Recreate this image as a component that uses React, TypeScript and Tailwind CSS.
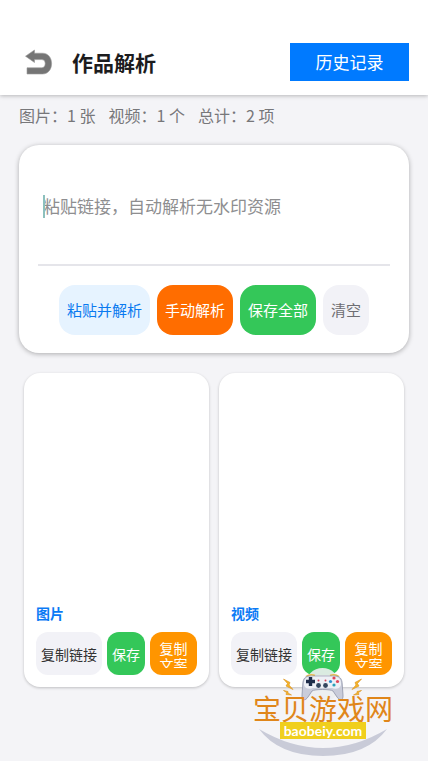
import React, { useState } from 'react';
import clsx from 'clsx';

interface MediaItem {
  id: string;
  label: string;
}

const items: MediaItem[] = [
  { id: 'image', label: '图片' },
  { id: 'video', label: '视频' },
];

const stats = ['图片：1 张', '视频：1 个', '总计：2 项'];

const actions = [
  { label: '粘贴并解析', className: 'bg-[#e6f3ff] text-[#0a7af0]' },
  { label: '手动解析', className: 'bg-[#ff6d00] text-white' },
  { label: '保存全部', className: 'bg-[#34c759] text-white' },
  { label: '清空', className: 'bg-[#f2f2f7] text-[#6e6e73]' },
];

const BackIcon: React.FC = () => (
  <svg viewBox="0 0 28 26" className="h-[26px] w-7" fill="none">
    <path
      d="M0.500 7.200L9.500 1V4.200H17.500C23 4.200 26.600 8.500 26.600 14.500S23 25 17.500 25H2V18.800H16.500C19 18.800 20.200 17 20.200 14.600S19 10.600 16.500 10.600H9.500V13.500Z"
      fill="#757575"
      stroke="#9a9a9a"
      strokeWidth="0.6"
      strokeLinejoin="round"
    />
  </svg>
);

const MediaCard: React.FC<{ item: MediaItem }> = ({ item }) => (
  <article className="rounded-2xl bg-white p-3 shadow-[0_1px_3px_rgba(0,0,0,0.22)]">
    <div className="h-[218px]" />
    <h2 className="text-sm leading-5 font-bold text-[#0a7af5]">{item.label}</h2>
    <div className="mt-[9px] flex gap-[5px] text-sm leading-4">
      <button className="h-[43px] rounded-xl bg-[#f2f2f7] px-[5px] whitespace-nowrap text-[#333333]">
        复制链接
      </button>
      <button className="h-[43px] rounded-xl bg-[#34c759] px-[5px] whitespace-nowrap text-white">
        保存
      </button>
      <button className="h-[43px] w-12 rounded-xl bg-[#ff9500] px-[9px] text-white">
        <span className="block h-7 overflow-hidden">复制文案</span>
      </button>
    </div>
  </article>
);

const Gamepad: React.FC = () => (
  <svg viewBox="0 0 80 34" className="h-[34px] w-20" fill="none">
    <circle cx="39.500" cy="17" r="17" fill="#eceef0" opacity="0.9" />
    {/* sparks */}
    <g fill="#f5b52a" stroke="#d98e1d" strokeWidth="0.6">
      <path d="M0.500 11L7 14.500L6 17L10 21.500L3 18L4.500 15.500Z" />
      <path d="M0.500 22.500L5 23.500L5 25L8.500 27L3 26.500L3.500 24.500Z" />
      <path d="M78.500 11L72 14.500L73 17L69 21.500L76 18L74.500 15.500Z" />
      <path d="M78.500 22.500L74 23.500L74 25L70.500 27L76 26.500L75.500 24.500Z" />
    </g>
    {/* shoulder buttons */}
    <path d="M23 8.500Q27 5.500 32 7.500M47 7.500Q52 5.500 56 8.500" stroke="#e9b949" strokeWidth="1.500" />
    {/* body */}
    <path
      d="M27 8H52C57 8 59 11 59.200 16L60 27C60.500 33 56.500 33 54 29L50 23C48 21 31 21 29 23L25 29C22.500 33 18.500 33 19 27L19.800 16C20 11 22 8 27 8Z"
      fill="#c9ccda"
      stroke="#8f94a8"
      strokeWidth="0.8"
    />
    <path d="M28 8.500H51C56 8.500 58.500 12 58 17C57 21 52 21.500 49 20H30C27 21.500 22 21 21 17C20.500 12 23 8.500 28 8.500Z" fill="#eef0f6" />
    <path d="M27.500 9V18M23 13.500H32" stroke="#1f2d4a" strokeWidth="3.400" />
    <circle cx="35.500" cy="17.500" r="2.400" fill="#33455f" />
    <circle cx="42.500" cy="17.500" r="2.400" fill="#33455f" />
    <circle cx="35.500" cy="12.500" r="1" fill="#d0455a" />
    <circle cx="42.500" cy="12.500" r="1" fill="#d0455a" />
    <circle cx="51" cy="10" r="1.600" fill="#e0455a" />
    <circle cx="47.500" cy="13.500" r="1.600" fill="#2e8fd0" />
    <circle cx="54.500" cy="13.500" r="1.600" fill="#e0455a" />
    <circle cx="51" cy="17" r="1.600" fill="#2aa0b8" />
  </svg>
);

const Watermark: React.FC = () => (
  <div className="pointer-events-none absolute right-[34px] bottom-1 flex w-[142px] flex-col items-center">
    <Gamepad />
    <div className="-mt-2 text-[28px] leading-[28px] whitespace-nowrap text-[#e0861a]">宝贝游戏网</div>
    <div className="z-10 bg-[#f0cf1d] px-1 font-[Lato,'Open_Sans',sans-serif] text-sm leading-[17px] font-bold text-white">
      baobeiy.com
    </div>
    <svg viewBox="0 0 128 28" className="-mt-[10px] h-7 w-32">
      <path d="M0 0Q64 38 128 0Q108 27 64 27Q20 27 0 0Z" fill="#c9cbd8" />
    </svg>
  </div>
);

export default function App() {
  const [link, setLink] = useState('');

  return (
    <div className="relative min-h-screen bg-[#f4f4f7] font-['Noto_Sans_CJK_SC',sans-serif]">
      <header className="flex items-center bg-white pt-[43px] pr-[19px] pb-[14px] pl-[25px] shadow-[0_1px_4px_rgba(0,0,0,0.25)]">
        <button aria-label="返回">
          <BackIcon />
        </button>
        <h1 className="ml-[19px] flex-1 text-[21px] leading-9 font-bold text-[#1c1c1e]">作品解析</h1>
        <button className="h-[38px] w-[119px] bg-[#007aff] text-[17px] text-white">历史记录</button>
      </header>

      <main>
        <div className="flex gap-[13px] px-[19px] pt-2 text-base leading-6 text-[#77777a]">
          {stats.map((text) => (
            <span key={text}>{text}</span>
          ))}
        </div>

        <section className="mx-[19px] mt-[18px] rounded-[20px] bg-white px-[19px] pt-[15px] pb-[18px] shadow-[0_1px_5px_rgba(0,0,0,0.3)]">
          <div className="relative">
            <input
              type="text"
              aria-label="链接"
              value={link}
              onChange={(e) => setLink(e.target.value)}
              placeholder="粘贴链接，自动解析无水印资源"
              className="block h-[106px] w-full border-b-2 border-[#e5e5ea] px-[5px] pb-[14px] text-[17px] text-[#333333] caret-[#80b8b4] outline-none placeholder:text-[#8e8e90]"
            />
            {!link && <span className="absolute top-[35px] left-[5px] h-[23px] w-[2px] bg-[#8cc0bd]" />}
          </div>
          <div className="mt-[19px] flex justify-center gap-[7px]">
            {actions.map((action) => (
              <button
                key={action.label}
                className={clsx('h-[50px] rounded-2xl px-2 text-[15px] whitespace-nowrap', action.className)}
              >
                {action.label}
              </button>
            ))}
          </div>
        </section>

        <section className="mx-6 mt-5 grid grid-cols-2 gap-[10px]">
          {items.map((item) => (
            <MediaCard key={item.id} item={item} />
          ))}
        </section>
      </main>

      <Watermark />
    </div>
  );
}
